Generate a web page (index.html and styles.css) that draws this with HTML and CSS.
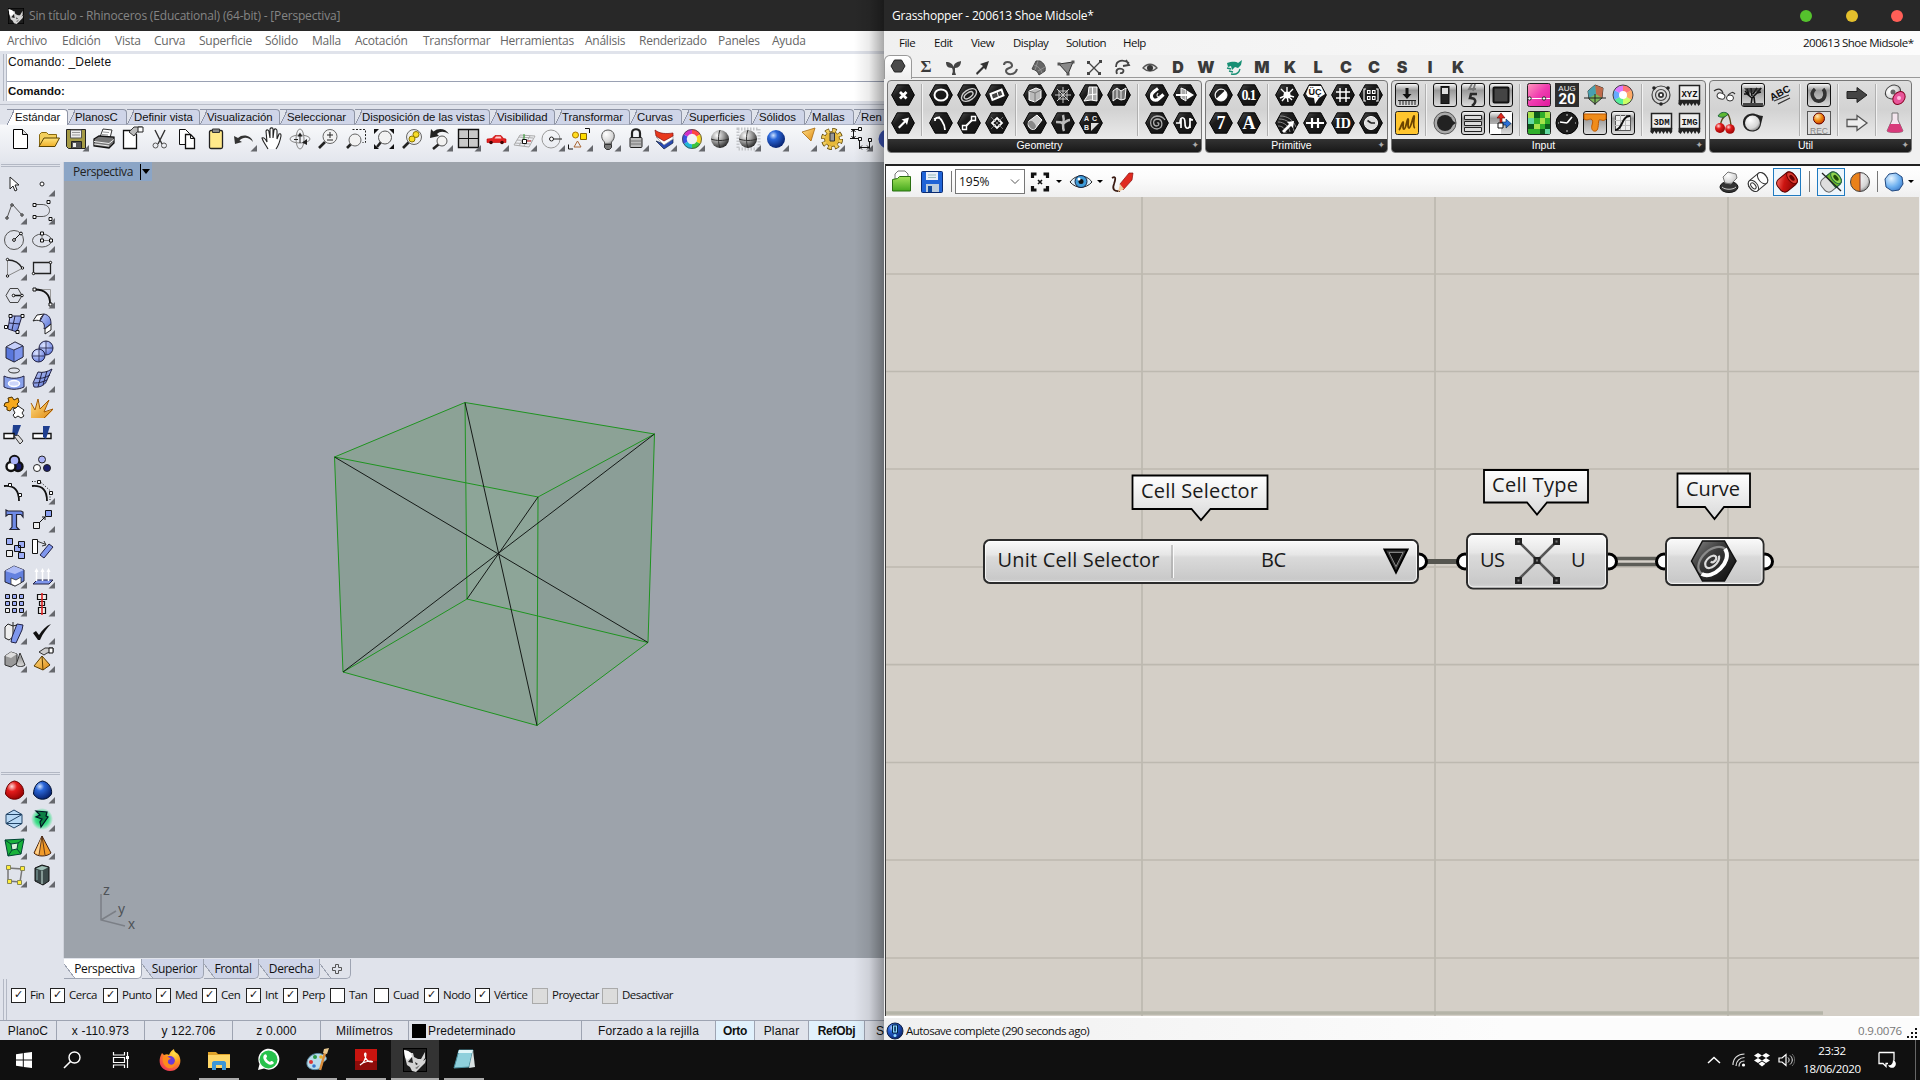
FILE: index.html
```html
<!DOCTYPE html>
<html lang="es">
<head>
<meta charset="utf-8">
<title>Rhinoceros / Grasshopper</title>
<link rel="stylesheet" href="styles.css">
</head>
<body>
<svg class="defs">
  <defs>
    <linearGradient id="gHex" x1="0" y1="0" x2="1" y2="1"><stop offset="0" stop-color="#555"/><stop offset=".35" stop-color="#1c1c1c"/><stop offset="1" stop-color="#111"/></linearGradient>
    <linearGradient id="gHexBig" x1="0" y1="0" x2="1" y2="1"><stop offset="0" stop-color="#8a8a8a"/><stop offset=".4" stop-color="#3a3a3a"/><stop offset="1" stop-color="#0c0c0c"/></linearGradient>
    <linearGradient id="gBtn" x1="0" y1="0" x2="0" y2="1"><stop offset="0" stop-color="#fff"/><stop offset=".3" stop-color="#999"/><stop offset="1" stop-color="#ddd"/></linearGradient>
    <linearGradient id="gNode" x1="0" y1="0" x2="0" y2="1"><stop offset="0" stop-color="#fbfbfb"/><stop offset=".34" stop-color="#e6e6e6"/><stop offset=".4" stop-color="#dadada"/><stop offset=".9" stop-color="#c9c9c9"/><stop offset="1" stop-color="#d6d6d6"/></linearGradient>
    <linearGradient id="gTip" x1="0" y1="0" x2="0" y2="1"><stop offset="0" stop-color="#fff"/><stop offset="1" stop-color="#d9d9d9"/></linearGradient>
    <linearGradient id="gBlue" x1="0" y1="0" x2="1" y2="1"><stop offset="0" stop-color="#c3cdf8"/><stop offset="1" stop-color="#5672d8"/></linearGradient>
    <linearGradient id="gOrange" x1="0" y1="0" x2="1" y2="1"><stop offset="0" stop-color="#ffe08a"/><stop offset="1" stop-color="#e08a10"/></linearGradient>
    <linearGradient id="gFold" x1="0" y1="0" x2="0" y2="1"><stop offset="0" stop-color="#ffe37a"/><stop offset="1" stop-color="#efb02a"/></linearGradient>
    <linearGradient id="gPink" x1="0" y1="0" x2="1" y2="1"><stop offset="0" stop-color="#f9b"/><stop offset=".5" stop-color="#f03cb0"/><stop offset="1" stop-color="#e0189c"/></linearGradient>
    <linearGradient id="gGrn" x1="0" y1="0" x2="0" y2="1"><stop offset="0" stop-color="#a6e35c"/><stop offset="1" stop-color="#45a81e"/></linearGradient>
    <linearGradient id="gRedCyl" x1="0" y1="0" x2="1" y2="1"><stop offset="0" stop-color="#ff7a70"/><stop offset=".4" stop-color="#cc1410"/><stop offset="1" stop-color="#7a0404"/></linearGradient>
    <radialGradient id="rGray" cx=".35" cy=".3" r=".75"><stop offset="0" stop-color="#fff"/><stop offset=".5" stop-color="#999"/><stop offset="1" stop-color="#222"/></radialGradient>
    <radialGradient id="rPale" cx=".35" cy=".3" r=".8"><stop offset="0" stop-color="#fff"/><stop offset=".7" stop-color="#d5d5d5"/><stop offset="1" stop-color="#777"/></radialGradient>
    <radialGradient id="rBlue" cx=".35" cy=".3" r=".8"><stop offset="0" stop-color="#cfe2ff"/><stop offset=".3" stop-color="#2a66d8"/><stop offset="1" stop-color="#02185f"/></radialGradient>
    <radialGradient id="rSky" cx=".35" cy=".3" r=".8"><stop offset="0" stop-color="#e6f4ff"/><stop offset=".6" stop-color="#6db0f0"/><stop offset="1" stop-color="#3a78c8"/></radialGradient>
    <radialGradient id="rRed" cx=".35" cy=".3" r=".8"><stop offset="0" stop-color="#ffd9d9"/><stop offset=".35" stop-color="#e31b1b"/><stop offset="1" stop-color="#8c0000"/></radialGradient>
    <radialGradient id="rLav" cx=".35" cy=".3" r=".8"><stop offset="0" stop-color="#dde4ff"/><stop offset="1" stop-color="#5a74dc"/></radialGradient>
    <radialGradient id="rOr" cx=".35" cy=".3" r=".8"><stop offset="0" stop-color="#ffe9b8"/><stop offset=".5" stop-color="#f08a10"/><stop offset="1" stop-color="#c03000"/></radialGradient>
    <radialGradient id="rFox" cx=".7" cy=".2" r=".9"><stop offset="0" stop-color="#ffe24a"/><stop offset=".45" stop-color="#ff9a1e"/><stop offset="1" stop-color="#f0305a"/></radialGradient>
    <radialGradient id="rGlow"><stop offset="0" stop-color="#0fae55"/><stop offset=".6" stop-color="#42e08c"/><stop offset="1" stop-color="#42e08c" stop-opacity="0"/></radialGradient>
    <path id="dd" d="M27 20v6.500h-6.500z" fill="#66686d"/>
    <path id="hex" d="M2.600 14L8.200 3.800h11.600L25.400 14l-5.600 10.200H8.200z" fill="url(#gHex)" stroke="#000"/>
    <rect id="btn" x="2.500" y="2.500" width="23" height="23" rx="2.500" fill="url(#gBtn)" stroke="#111"/>
    <path id="chip" d="M4.500 4.500h20v15h-20z" fill="#efefef" stroke="#222" stroke-width="1.500"/>
    <path id="chipleg" d="M3.800 19h21.400v4l-1.700 2-1.700-3-1.700 3-1.800-3-1.800 3-1.800-3-1.800 3-1.800-3-1.800 3-1.800-3-1.800 3-2.400-2z" fill="#222"/>
    <path id="lens" d="M5 23l6-6" stroke="#222" stroke-width="2.600" fill="none"/>
    <g id="rhino"><rect x=".5" y=".5" width="23" height="23" fill="#1c1c1c" stroke="#000"/><path d="M1 2l4 1 3 2 2 0 1 4 4 2 3 0 4-7 0 6-2 3 3-2-1 4-4 4-3 3-2 2-4-1-2-4-3-2-1-4-1-4z" fill="#d4d4d4"/><path d="M1 2l4 1 3 2 1 4-5 3-2-3z" fill="#fff"/><path d="M9 9l-4 5 5 1zM12 14l3 2-2 1z" fill="#222"/><path d="M12 20l5-3-3 4z" fill="#777"/></g>
    <path id="plus" d="M-1.500 -4.500h3v3h3v3h-3v3h-3v-3h-3v-3h3z" fill="none" stroke="#555"/>
  </defs>
</svg>

<div class="desktop">
<section class="rhino">
  <header class="title"><svg width="16" height="16" viewBox="0 0 24 24"><use href="#rhino"/></svg><span>Sin título - Rhinoceros (Educational) (64-bit) - [Perspectiva]</span></header>
  <nav class="rmenu"><span>Archivo</span><span>Edición</span><span>Vista</span><span>Curva</span><span>Superficie</span><span>Sólido</span><span>Malla</span><span>Acotación</span><span>Transformar</span><span>Herramientas</span><span>Análisis</span><span>Renderizado</span><span>Paneles</span><span>Ayuda</span></nav>
  <div class="command"><p>Comando: _Delete</p><p class="prompt">Comando:</p></div>
  <div class="toolarea">
    <div class="tabs"><span class="on">Estándar</span><span>PlanosC</span><span>Definir vista</span><span>Visualización</span><span>Seleccionar</span><span>Disposición de las vistas</span><span>Visibilidad</span><span>Transformar</span><span>Curvas</span><span>Superficies</span><span>Sólidos</span><span>Mallas</span><span>Ren</span></div>
    <div class="tools">
      <svg class="i"><path d="M7.500 4.500h9l5 5v14h-14z" fill="#fff" stroke="#000"/><path d="M16.500 4.500v5h5" fill="#ddd" stroke="#000"/></svg>
      <svg class="i"><path d="M5.500 20V9.500l2-2h5l2 2h8V14" fill="#f3cf5d" stroke="#8a6a10"/><path d="M5 21.500L10 13h15.500l-4.500 8.500z" fill="url(#gFold)" stroke="#5a4300"/></svg>
      <svg class="i"><path d="M4.500 4.500h19v19h-17l-2-2z" fill="#a59b45" stroke="#222"/><path d="M8.500 5h11v8h-11z" fill="#eee" stroke="#555"/><path d="M10 7.500h8M10 10h8" stroke="#999"/><path d="M9.500 16.500h10v7h-10z" fill="#555" stroke="#222"/><path d="M11 18h3v4h-3z" fill="#eee"/><use href="#dd"/></svg>
      <svg class="i"><path d="M10 12l3-8 9 1-2 8z" fill="#fff" stroke="#333"/><path d="M13 7l6 .5M12 9.500l6 .5" stroke="#999"/><path d="M4 14l5-3 15 1v6l-5 5-15-2z" fill="#777" stroke="#111" stroke-width="1.300"/><path d="M4 16.500l15 2 5-4M4 19l15 2" stroke="#eee" fill="none"/></svg>
      <svg class="i"><path d="M5.500 5.500h9l4 4v14h-13z" fill="#fff" stroke="#111" stroke-width="1.300"/><path d="M11 7l5-5h8v4l-5 1-3 4z" fill="#bbb" stroke="#333"/><path d="M20 2h5v5h-5z" fill="#fff" stroke="#222"/></svg>
      <svg class="i"><path d="M9 5l7 14M19 5l-7 14" stroke="#333" stroke-width="1.400"/><circle cx="9.500" cy="20.500" r="2.500" fill="none" stroke="#555"/><circle cx="18" cy="20.500" r="2.500" fill="none" stroke="#555"/></svg>
      <svg class="i"><path d="M5.500 4.500h6l4 4v11h-10z" fill="#fff" stroke="#111"/><path d="M11.500 9.500h5l4 4v10h-9z" fill="#fff" stroke="#111" stroke-width="1.300"/><path d="M16.500 9.500v4h4" fill="none" stroke="#111"/></svg>
      <svg class="i"><rect x="7.500" y="5.500" width="13" height="18" rx="1.500" fill="#ffe98a" stroke="#222" stroke-width="1.300"/><path d="M10.500 4h7v3.500h-7z" fill="#888" stroke="#333"/></svg>
      <svg class="i"><path d="M4 11l1 8 7-2-2.500-1.500c4-4 9-3.500 13.500 1.500-1-6-10-9-15-4z" fill="#333"/><use href="#dd"/></svg>
      <svg class="i"><path d="M10 24c-2-4-5-7-6-11 2-1 4 2 5 4L8 6c1-2 3-1 3 1l1 6V4c1-2 3-1 3 0v9l1-8c1-2 3-1 3 1v8l2-5c2-1 2 1 2 2-1 5-2 9-5 13" fill="#fff" stroke="#222" stroke-width="1.100"/></svg>
      <svg class="i"><ellipse cx="14" cy="14" rx="10" ry="4" fill="none" stroke="#888"/><ellipse cx="14" cy="14" rx="4" ry="10" fill="none" stroke="#888"/><path d="M14 9v9" stroke="#222" fill="none"/><path d="M11.500 11.500l2.500-4 2.500 4zM16 17.500l5-3.500v6zM8 14h4v1H8z" fill="#222"/></svg>
      <svg class="i"><use href="#lens"/><circle cx="16" cy="11.500" r="7" fill="#f2f2f2" stroke="#666"/><path d="M13 10h6M16 7v6M13 15h6" stroke="#222"/></svg>
      <svg class="i"><path d="M10.500 4.500h13v13h-3" fill="none" stroke="#222" stroke-dasharray="2 1.500"/><use href="#lens"/><circle cx="13" cy="15" r="6" fill="#f2f2f2" stroke="#666"/></svg>
      <svg class="i"><path d="M4 9V4h5zM24 9V4h-5zM4 19v5h5zM24 19v5h-5z" fill="#111"/><path d="M7 22l4-5" stroke="#222" stroke-width="2.500"/><circle cx="15" cy="12.500" r="6.500" fill="#f2f2f2" stroke="#555"/></svg>
      <svg class="i"><use href="#lens"/><circle cx="16" cy="12" r="7.500" fill="#eee" stroke="#666"/><circle cx="14" cy="14" r="3" fill="#f7dc28" stroke="#8a7400"/><circle cx="18" cy="9.500" r="3" fill="#f7dc28" stroke="#8a7400"/></svg>
      <svg class="i"><path d="M4 13l1-9 2.500 2.500C13 2 20 4 23 9c-5-3-9-3-12 0l2 2z" fill="#222"/><path d="M7 24l6-5" stroke="#222" stroke-width="2.500"/><circle cx="16" cy="16" r="5" fill="#f2f2f2" stroke="#555"/><use href="#dd"/></svg>
      <svg class="i"><path d="M4.500 4.500h20v18h-20z" fill="#c9c9c9" stroke="#111" stroke-width="1.400"/><path d="M14.500 4v18M4 13.500h20" stroke="#111"/><use href="#dd"/></svg>
      <svg class="i"><path d="M5 14l5-.5 3-3h6l2.500 3 2.500.5v3.500H5z" fill="#e22222" stroke="#b00" stroke-width=".6"/><path d="M14 11.500h4.500l1 2h-7z" fill="#ffd0d0"/><circle cx="9" cy="17.500" r="1.800" fill="#400"/><circle cx="20" cy="17.500" r="1.800" fill="#400"/><use href="#dd"/></svg>
      <svg class="i"><path d="M4 20l6-10 15 1-6 11zM7 15l15 1M9 21l6-11M14 21l6-10M5 18l15 1M9 12l14 1" fill="none" stroke="#aaa"/><path d="M14 16V9" stroke="#2a9a2a"/><path d="M14 16h7" stroke="#c22"/><path d="M12.500 14.500h4v4h-4z" fill="#fff" stroke="#111"/><use href="#dd"/></svg>
      <svg class="i"><circle cx="13" cy="14" r="9" fill="none" stroke="#999"/><path d="M14 14h10" stroke="#222"/><circle cx="13.500" cy="14" r="2" fill="#fff" stroke="#222"/><use href="#dd"/></svg>
      <svg class="i"><path d="M19 3.500h4.500V8M2.500 19.500V24H7" fill="none" stroke="#111"/><circle cx="9.500" cy="10" r="3" fill="#fd2" stroke="#a70"/><path d="M14.500 8.500h6v6h-6z" fill="#fd0" stroke="#860"/><path d="M11.500 16l3.500 6H8z" fill="none" stroke="#a63"/><use href="#dd"/></svg>
      <svg class="i"><path d="M10.500 17c-5-4.500-3-12 3.500-12s8.500 7.500 3.500 12v2h-7z" fill="url(#rPale)" stroke="#555"/><path d="M10.500 19.500h7v3l-2 2h-3l-2-2z" fill="#777" stroke="#333"/><use href="#dd"/></svg>
      <svg class="i"><path d="M10 13V8c0-5 8-5 8 0v5" fill="none" stroke="#222" stroke-width="2.200"/><rect x="8" y="12.500" width="12" height="10" rx="1" fill="#bbb" stroke="#222"/><path d="M9 16h10M9 19h10" stroke="#777"/><use href="#dd"/></svg>
      <svg class="i"><path d="M6 16l8 8 9-6v-4l-9 5z" fill="#2a4ab0" stroke="#124" stroke-width=".7"/><path d="M6 12l8 8 9-6v-4l-9 5z" fill="#fff" stroke="#999" stroke-width=".7"/><path d="M5 5c5 4 11 4 18 3v3l-9 5-8-5z" fill="#e8381c" stroke="#811" stroke-width=".7"/><use href="#dd"/></svg>
      <svg class="i"><g fill="none" stroke-width="4.500"><path d="M14 6.500a7.500 7.500 0 016.500 3.750" stroke="#f44"/><path d="M20.500 10.250a7.500 7.500 0 010 7.500" stroke="#f5d520"/><path d="M20.500 17.750A7.500 7.500 0 0114 21.500" stroke="#3bc43b"/><path d="M14 21.500a7.500 7.500 0 01-6.500-3.750" stroke="#20b8d8"/><path d="M7.500 17.750a7.500 7.500 0 010-7.500" stroke="#3a50e0"/><path d="M7.500 10.250A7.500 7.500 0 0114 6.500" stroke="#d030c8"/></g><circle cx="14" cy="14" r="9.500" fill="none" stroke="#444" stroke-width=".8"/><use href="#dd"/></svg>
      <svg class="i"><circle cx="14" cy="14" r="9" fill="url(#rGray)"/><path d="M5 14c5 2 13 2 18 0M14 5c-2 5-2 13 0 18" stroke="#333" fill="none"/></svg>
      <svg class="i"><path d="M4 4h21v20H4z" fill="none" stroke="#c4c6ca" stroke-width="3" stroke-dasharray="1.500 1.500"/><circle cx="14" cy="14" r="9" fill="url(#rGray)"/><path d="M5 14c5 2 13 2 18 0M14 5c-2 5-2 13 0 18" stroke="#333" fill="none"/><use href="#dd"/></svg>
      <svg class="i"><circle cx="14" cy="14" r="9" fill="url(#rBlue)"/><use href="#dd"/></svg>
      <svg class="i"><path d="M12 7l13-4-4 13z" fill="url(#gOrange)" stroke="#a76a10" stroke-width=".8"/><use href="#dd"/></svg>
      <svg class="i"><circle cx="14" cy="14" r="8.500" fill="none" stroke="#5c4300" stroke-width="5" stroke-dasharray="4 2.670"/><circle cx="14" cy="14" r="7.500" fill="#e7b93a" stroke="#6b4a00" stroke-width=".8"/><circle cx="14" cy="14" r="8.500" fill="none" stroke="#f0cc5c" stroke-width="3.500" stroke-dasharray="3 3.670" stroke-dashoffset="-.5"/><path d="M12 8h4.500v8H12z" fill="#999" stroke="#333"/><use href="#dd"/></svg>
      <svg class="i"><path d="M5 4.500h10M4 13.500h8M7.500 5v8M13.500 13v11M23.500 15v9M14 22.500h9M12.500 4.500h2" stroke="#111" fill="none"/><path d="M12.500 2.500h3v3h-3zM12.500 12.500h3v3h-3zM22.500 13.500h3v3h-3z" fill="#fff" stroke="#111"/><path d="M5.500 7l2-2.500 2 2.500M5.500 11l2 2.500 2-2.500M16 20.500l-2 2 2 2M21 20.500l2 2-2 2" stroke="#111" fill="none"/><use href="#dd"/></svg>
      <svg class="i"><circle cx="14" cy="14" r="9.500" fill="#3d55b8"/></svg>
    </div>
  </div>
  <div class="work">
    <aside class="side">
      <div class="palette">
      <svg class="i"><path d="M10 7v12l3-3 2 5 2-1-2-5h4z" fill="#fff" stroke="#222"/></svg>
      <svg class="i"><circle cx="14" cy="14" r="2" fill="#fff" stroke="#222"/><use href="#dd"/></svg>
      <svg class="i"><path d="M7 20l5-14 10 11" fill="none" stroke="#555"/><g fill="#fff" stroke="#111"><circle cx="7" cy="20" r="1.200"/><circle cx="12" cy="7" r="1.200"/><circle cx="22" cy="17" r="1.200"/></g><use href="#dd"/></svg>
      <svg class="i"><path d="M6 6.500h8c10 0 10 12 0 12H6" fill="none" stroke="#555"/><path d="M5 5.500h3v3H5zM5 17.500h3v3H5zM19 2.500h3v3h-3zM21 19.500h3v3h-3z" fill="#fff" stroke="#111"/><use href="#dd"/></svg>
      <svg class="i"><circle cx="14" cy="14" r="9.500" fill="none" stroke="#555"/><path d="M14 14l7-7" stroke="#111"/><circle cx="14" cy="14" r="1.400" fill="#fff" stroke="#111"/><circle cx="21" cy="7.500" r="1.400" fill="#fff" stroke="#111"/><use href="#dd"/></svg>
      <svg class="i"><ellipse cx="14" cy="14.500" rx="9.500" ry="6.500" fill="none" stroke="#555"/><path d="M14 14.500V8M14 14.500h9" stroke="#777"/><path d="M12.500 6h3v3h-3zM12.500 13h3v3h-3zM21.500 13h3v3h-3z" fill="#fff" stroke="#111"/><use href="#dd"/></svg>
      <svg class="i"><path d="M7.500 6v16" stroke="#888"/><path d="M7.500 22L23 14" stroke="#888"/><path d="M7.500 6c8 0 12 3 15 8.500" fill="none" stroke="#222" stroke-width="1.300"/><g fill="#fff" stroke="#111"><circle cx="7.500" cy="5.500" r="1.200"/><circle cx="7.500" cy="22" r="1.200"/><circle cx="22.500" cy="14" r="1.200"/></g><use href="#dd"/></svg>
      <svg class="i"><path d="M5.500 8.500h17v11h-17z" fill="none" stroke="#222" stroke-width="1.300"/><circle cx="5.500" cy="19.500" r="1.200" fill="#fff" stroke="#111"/><circle cx="22.500" cy="8.500" r="1.200" fill="#fff" stroke="#111"/><use href="#dd"/></svg>
      <svg class="i"><path d="M6 13.500l4-7h8l4 7-4 7h-8z" fill="none" stroke="#444"/><path d="M14 13.500h8" stroke="#111" stroke-width="1.500"/><circle cx="13.500" cy="13.500" r="1.300" fill="#fff" stroke="#111"/><circle cx="22" cy="13.500" r="1.300" fill="#fff" stroke="#111"/><use href="#dd"/></svg>
      <svg class="i"><path d="M7 7.500h15.500V22" fill="none" stroke="#999"/><path d="M7 7.500c10 0 15 5 15 14" fill="none" stroke="#111" stroke-width="1.800"/><path d="M5 6h3v3H5zM21 21h3v3h-3z" fill="#fff" stroke="#111"/><use href="#dd"/></svg>
      <svg class="i"><path d="M10 6h12l-5 16-9-3z" fill="url(#gBlue)" stroke="#224"/><path d="M9 13l11 1M15 6l-3 14" stroke="#224"/><path d="M9 4.500h3v3H9zM21 4.500h3v3h-3zM4.500 15.500h3v3h-3zM16 20.500h3v3h-3z" fill="#fff" stroke="#111"/><use href="#dd"/></svg>
      <svg class="i"><path d="M5 11l4-6 7-1c-2 2-4 4-4 7-2-1-4-1-7 0z" fill="#fff" stroke="#222"/><path d="M12 11l4-7c5 1 7 4 7 10l-7 5c1-4 0-7-4-8z" fill="url(#gBlue)" stroke="#224"/><path d="M23 14v6l-6 4v-5z" fill="#fff" stroke="#222"/><use href="#dd"/></svg>
      <svg class="i"><path d="M6 9l9-5 8 4v11l-9 5-8-4z" fill="#5a78dc" stroke="#223"/><path d="M6 9l9-5 8 4-9 4z" fill="#c6d0fa" stroke="#223" stroke-width=".7"/><path d="M14 12l9-4v11l-9 5z" fill="#7c94ec" stroke="#223" stroke-width=".7"/><use href="#dd"/></svg>
      <svg class="i"><circle cx="18" cy="10" r="7" fill="url(#rLav)" stroke="#224"/><circle cx="10.500" cy="17.500" r="6.500" fill="url(#rLav)" stroke="#224"/><path d="M11 10h14M18 3v14M4 18h13M11 11v13" stroke="#224" fill="none" stroke-width=".8"/><use href="#dd"/></svg>
      <svg class="i"><ellipse cx="14" cy="4.500" rx="5.500" ry="2.500" fill="none" stroke="#333"/><path d="M4 10c6 3 14 3 20 0v11c-6 3-14 3-20 0z" fill="#88a0ea" stroke="#224"/><ellipse cx="14" cy="17.500" rx="5.500" ry="3" fill="#cdd6fa" stroke="#fff" stroke-width="1.500"/><use href="#dd"/></svg>
      <svg class="i"><path d="M5 17l5-11c5 1 9 0 14-3l-5 11c-1 4-6 8-13 7z" fill="url(#gBlue)" stroke="#224"/><path d="M7 12c5 1 10 0 15-3M14 6l-4 15M19 5l-4 14M6 17c5 0 9-1 13-3" stroke="#224" fill="none"/><use href="#dd"/></svg>
      <svg class="i"><path d="M5 9l4-1-1-4 4-1 2 3 4-2 1 4-2 2 2 3-4 1-2-1-3 4-3-1v-3l-3-1z" fill="#f7a91c" stroke="#4a3000"/><path d="M13 15l3-1 2-2 3 2 3 2-2 3 2 3-3 2-3-2-3 2-2-3 2-2z" fill="#fff" stroke="#222"/></svg>
      <svg class="i"><path d="M3 24V10l4 6 3-10 2 9 9-9-5 12 9-2-8 8z" fill="url(#gOrange)"/><path d="M3 9l4 7 3-11 2 10 9-9-5 12 9-3-9 9" fill="none" stroke="#a55a00"/></svg>
      <svg class="i"><path d="M13 3h8l-5 13-4-1z" fill="#1f3f8f"/><path d="M4 11.500h10v5H4z" fill="#fff" stroke="#111" stroke-width="1.400"/><path d="M14 14l4-1 5 6-3 3z" fill="#ddd" stroke="#333"/></svg>
      <svg class="i"><path d="M5 11.500h18v5H5z" fill="#fff" stroke="#111" stroke-width="1.400"/><path d="M15 4h7l-4 13-3-2z" fill="#1f3f8f"/></svg>
      <svg class="i"><g stroke="#111" stroke-width="2.400"><circle cx="14.500" cy="10.500" r="4.500" fill="#aab2f7"/><circle cx="18" cy="16.500" r="4.500" fill="#1b1f70"/><circle cx="11" cy="16.500" r="4.500" fill="#fff"/></g><circle cx="14.500" cy="10.500" r="3.800" fill="#aab2f7"/><use href="#dd"/></svg>
      <svg class="i"><g stroke="#222"><circle cx="14" cy="9.500" r="3.500" fill="#aab2f7"/><circle cx="19" cy="18" r="3.500" fill="#1b1f70"/><circle cx="9" cy="18" r="3.500" fill="#fff"/></g></svg>
      <svg class="i"><path d="M4 8c11-1 15 5 15 15" fill="none" stroke="#111" stroke-width="1.800"/><path d="M8.500 5.500h3v3h-3zM18.500 15.500h3v3h-3z" fill="#fff" stroke="#111"/></svg>
      <svg class="i"><path d="M4 8c11-1 15 5 15 15" fill="none" stroke="#111" stroke-width="1.800"/><path d="M4 3.500h8l10 9v10" fill="none" stroke="#111" stroke-dasharray="1 1.500"/><path d="M9.500 2.500h3v3h-3zM21.500 13.500h3v3h-3z" fill="#fff" stroke="#111"/><use href="#dd"/></svg>
      <svg class="i"><path d="M6 4l2 1h13l2 1v5l-2-2.500h-4.500V21l2.500 2.500h-9l2-2.500V8.500H8L6 10z" fill="#6f8be6" stroke="#223" stroke-width="1.200"/></svg>
      <svg class="i"><path d="M5.500 16.500h6v6h-6z" fill="#eee" stroke="#111"/><path d="M17.500 4.500h6v6h-6z" fill="#8a9ff0" stroke="#111"/><path d="M11 17l6-6M14 11h3v3" stroke="#111" fill="none"/><use href="#dd"/></svg>
      <svg class="i"><g stroke="#111" fill="#9cacf5"><path d="M6.500 4.500h6v6h-6zM18.500 7.500h6v6h-6zM14.500 11.500h6v6h-6zM18.500 18.500h6v6h-6z"/><path d="M6.500 16.500h6v6h-6z" fill="#eee"/></g></svg>
      <svg class="i"><path d="M4.500 5.500h5v14h-5z" fill="#fff" stroke="#111"/><path d="M12 21l9-11 4 3-9 11z" fill="#7f97ee" stroke="#224"/><path d="M10 7.500l8 3M14 12l4-1-2-4" stroke="#333" fill="none"/></svg>
      <svg class="i"><path d="M5 9l9-5 10 4v11l-9 5-10-4z" fill="#6481df" stroke="#223"/><path d="M5 9l9-5 10 4-9 4z" fill="#aebcf6"/><path d="M11 16l5 2 5-3v6l-6 3-4-2z" fill="#fff" stroke="#222" stroke-width=".7"/><use href="#dd"/></svg>
      <svg class="i"><path d="M5 22l4-4h16l-4 4z" fill="#7f97ee" stroke="#224"/><path d="M8.500 19V8M14.500 19V8M20.500 19V8" stroke="#fff" stroke-width="1.500"/><path d="M6.500 10l2-4 2 4zM12.500 10l2-4 2 4zM18.500 10l2-4 2 4z" fill="#fff"/><use href="#dd"/></svg>
      <svg class="i"><g fill="#9cacf5" stroke="#111"><path d="M5.500 4.500h4v4h-4zM12.500 4.500h4v4h-4zM19.500 4.500h4v4h-4zM5.500 11.500h4v4h-4zM12.500 11.500h4v4h-4zM19.500 11.500h4v4h-4zM12.500 18.500h4v4h-4zM19.500 18.500h4v4h-4z"/><path d="M5.500 18.500h4v4h-4z" fill="#eee"/></g><use href="#dd"/></svg>
      <svg class="i"><g fill="#eee" stroke="#111" stroke-width="1.200"><path d="M9.500 4.500h9v5h-9zM11.500 11.500h5v4h-5zM10.500 17.500h7v6h-7z"/></g><path d="M14 3v22" stroke="#d22" stroke-width="1.600"/><use href="#dd"/></svg>
      <svg class="i"><path d="M5 9l3-3 5 2v11l-4 3-4-2z" fill="#eee" stroke="#222"/><path d="M12 19l5-13 6 1-1 5-6 13-5-1z" fill="#7f97ee" stroke="#224"/><path d="M13 4v4l4-1" stroke="#222" fill="none"/><use href="#dd"/></svg>
      <svg class="i"><path d="M5 15l3-2 3 4C14 12 18 8 23 6c-4 4-8 9-11 16h-2z" fill="#111"/><use href="#dd"/></svg>
      <svg class="i"><path d="M5 10l6-4 6 2v9l-6 4-6-2z" fill="#999" stroke="#333"/><path d="M5 10l6-4 6 2-6 4z" fill="#ddd"/><path d="M20 7l5 12c-2 2-7 2-9 0z" fill="url(#gBtn)" stroke="#333"/><use href="#dd"/></svg>
      <svg class="i"><path d="M6 20l8-10 8 9-7 5z" fill="url(#gOrange)" stroke="#5a3c00"/><path d="M14 10l1 14" stroke="#5a3c00"/><path d="M11 6l6-4h8v4l-6 1-3 2z" fill="#ccc" stroke="#333"/><path d="M21 2h4v5h-4z" fill="#fff" stroke="#111"/><use href="#dd"/></svg>
      </div>
      <div class="palette second">
      <svg class="i"><path d="M14.500 4c6 1 10 7 9 13-4 7-14 7-18 0 0-6 3-12 9-13z" fill="url(#rRed)" stroke="#600"/><use href="#dd"/></svg>
      <svg class="i"><path d="M14.500 4c6 1 10 7 9 13-4 7-14 7-18 0 0-6 3-12 9-13z" fill="url(#rBlue)" stroke="#013"/><use href="#dd"/></svg>
      <svg class="i"><path d="M14 5l8 4.500v9L14 23l-8-4.500v-9z" fill="#b9d9f5" stroke="#246"/><path d="M6 9.500h16M6 18.500h16M6 18.500L22 9.500" stroke="#246" fill="none"/><use href="#dd"/></svg>
      <svg class="i"><circle cx="14" cy="14" r="11" fill="url(#rGlow)"/><path d="M8 6l11 1-1 4 2 1-7 10-1-5 2-3-6-2 4-2z" fill="#0b8044" stroke="#012" stroke-width="1.200"/><use href="#dd"/></svg>
      <svg class="i"><path d="M5 7l19-1-3 15-13 2z" fill="#19b23b" stroke="#043"/><path d="M11 11l7-1-1 6-5 1z" fill="#d8eed8" stroke="#043"/><path d="M5 7l6 4M24 6l-6 4M21 21l-4-5M8 23l4-6" stroke="#043"/><use href="#dd"/></svg>
      <svg class="i"><path d="M14 3l9 17c-4 4-14 4-17 0z" fill="#f09a2a" stroke="#421"/><path d="M14 3L7 20l4 2z" fill="#ffd08a"/><path d="M14 3l-3 19M14 3l3 19" stroke="#421" stroke-width=".8"/><use href="#dd"/></svg>
      <svg class="i"><path d="M8 7l14 1-2 13-12-1z" fill="none" stroke="#777" stroke-width="1.500"/><g fill="#ffee3a" stroke="#885"><path d="M6.500 4.500h4v4h-4zM20.500 5.500h4v4h-4zM7.500 18.500h4v4h-4zM17.500 19.500h4v4h-4z"/></g><use href="#dd"/></svg>
      <svg class="i"><path d="M7 7l7-3 7 2v14l-6 4-8-4z" fill="#3d4b4b" stroke="#111"/><path d="M8 7.500l6-2.500 6 1.500-6 3z" fill="#9fc0b8"/><path d="M14 10v13" stroke="#cfe8e0"/><path d="M9 9v10" stroke="#8aa"/><use href="#dd"/></svg>
      </div>
    </aside>
    <main class="viewport">
      <svg class="scene" width="820" height="795" viewBox="64 162 820 795">
        <path d="M334.500 457L465 402.500 654.500 434 648 642.500 537 725.500 343 672z" fill="#8b9e97"/>
        <path d="M334.500 457L465 402.500 654.500 434 538 497zM343 672l124-73 181 43.500L537 725.500z" fill="#8ca296"/>
        <path d="M465 480l73 17 0 120-71-18z" fill="#8da598"/>
        <path d="M334.500 457L465 402.500 654.500 434 538 497zM343 672l124-73 181 43.500L537 725.500zM334.500 457L343 672M465 402.500l2 196.500M654.500 434L648 642.500M538 497l-1 228.500" fill="none" stroke="#1f9420" stroke-width="1"/>
        <path d="M334.500 457L648 642.500M465 402.500L537 725.500M654.500 434L343 672M538 497L467 599" fill="none" stroke="#151a17" stroke-width="1"/>
        <path d="M101 894v26l24 6M101 920l15-9" fill="none" stroke="#7b7f86" stroke-width="1.500"/>
        <g class="axis"><text x="103" y="895">z</text><text x="118" y="914">y</text><text x="128" y="929">x</text></g>
      </svg>
      <div class="vplabel"><span>Perspectiva</span><i></i></div>
    </main>
  </div>
  <div class="vptabs"><span class="on">Perspectiva</span><span>Superior</span><span>Frontal</span><span>Derecha</span><span class="add"><svg width="10" height="10" viewBox="-5 -5 10 10"><use href="#plus"/></svg></span></div>
  <div class="osnap">
    <label class="ck">Fin</label><label class="ck">Cerca</label><label class="ck">Punto</label><label class="ck">Med</label><label class="ck">Cen</label><label class="ck">Int</label><label class="ck">Perp</label><label>Tan</label><label>Cuad</label><label class="ck">Nodo</label><label class="ck">Vértice</label><label class="off">Proyectar</label><label class="off">Desactivar</label>
  </div>
  <footer class="rstatus"><span>PlanoC</span><span>x -110.973</span><span>y 122.706</span><span>z 0.000</span><span>Milímetros</span><span class="layer"><i></i>Predeterminado</span><span>Forzado a la rejilla</span><span class="act">Orto</span><span>Planar</span><span class="act">RefObj</span><span class="cut">S</span></footer>
</section>

<section class="gh">
  <header class="title"><span>Grasshopper - 200613 Shoe Midsole*</span><div class="dots"><i class="g"></i><i class="y"></i><i class="r"></i></div></header>
  <nav class="gmenu"><span>File</span><span>Edit</span><span>View</span><span>Display</span><span>Solution</span><span>Help</span><span class="doc">200613 Shoe Midsole*</span></nav>
  <div class="gtabs">
    <svg class="i first"><path d="M6 10l3.500-6h7L20 10l-3.500 6h-7z" fill="#4a4a4a" stroke="#222"/></svg>
    <b class="sigma">Σ</b>
    <svg class="i"><path d="M12 19c1-2 1-4 0-6-5 0-6-3-6-6 4 0 7 2 7.500 5C14 8 17 7 21 6c0 4-2 7-6 7v4l1 3h-4z" fill="#444"/></svg>
    <svg class="i"><path d="M8 18l7-7-3-2 9-3-3 9-2-2-7 7z" fill="#333"/></svg>
    <svg class="i"><path d="M8 10c0-4 7-4 8 0s-6 2-6 6 9 5 11-2" fill="none" stroke="#555" stroke-width="2"/></svg>
    <svg class="i"><path d="M8 14l4-8 4 0c4 2 6 6 5 10l-6 4c-1-3-3-5-7-6z" fill="#666" stroke="#444"/><path d="M10 10c4 1 7 4 8 8M14 6l-3 9M21 12l-7 4" stroke="#999" fill="none" stroke-width=".8"/></svg>
    <svg class="i"><path d="M7 9l14-2-5 12z" fill="#888" stroke="#333"/><path d="M5.500 7.500h3v3h-3zM19.500 5.500h3v3h-3zM14.500 17.500h3v3h-3z" fill="#555"/></svg>
    <svg class="i"><path d="M9 18l5-5 6-6M9 8l5 5 6 6" stroke="#444" stroke-width="1.300" fill="none"/><path d="M7 6h3v3H7zM7 17h3v3H7zM19 5h3v3h-3zM18 17h3v3h-3z" fill="#444"/></svg>
    <svg class="i"><path d="M9 19c-2-5 2-6 5-5s1 5-2 4M8 12c0-7 7-8 13-4M18 5l3 5-6 1" fill="none" stroke="#444" stroke-width="1.800"/></svg>
    <svg class="i"><path d="M7 13c4-5 10-5 14 0-4 4-10 4-14 0z" fill="#ddd" stroke="#555" stroke-width="1.300"/><circle cx="14" cy="13" r="3" fill="#333"/></svg>
    <b>D</b><b>W</b>
    <svg class="i"><path d="M7 8c4-1 8-2 11 0l4-3-1 5-3 3-3-1-3 3-1-4-3 1z" fill="#178f74"/><path d="M7 13l4 1M9 16l4 1M11 19c5 1 8-1 9-5" stroke="#178f74" fill="none" stroke-width="1.300"/></svg>
    <b>M</b><b>K</b><b>L</b><b>C</b><b>C</b><b>S</b><b>I</b><b>K</b>
  </div>
  <div class="ribbon">
    <div class="panel">
      <div class="groups">
        <div class="grp c1">
          <svg class="i"><use href="#hex"/><path d="M11 11l6.500 6.500M17.500 11L11 17.500" stroke="#fff" stroke-width="2.800"/></svg>
          <svg class="i"><use href="#hex"/><path d="M9 18l6-6-2.500-1.500 7.500-2-2 7.500-1.500-2.500-6 6z" fill="#fff"/></svg>
        </div>
        <div class="grp c3">
          <svg class="i"><use href="#hex"/><ellipse cx="14" cy="14" rx="6.500" ry="5.500" fill="none" stroke="#fff" stroke-width="2"/></svg>
          <svg class="i"><use href="#hex"/><g transform="rotate(-35 14 14)" fill="none" stroke="#ccc" stroke-width="1.400"><ellipse cx="14" cy="14" rx="8.500" ry="5"/><ellipse cx="13.500" cy="14" rx="5" ry="2.500"/></g></svg>
          <svg class="i"><use href="#hex"/><path d="M7.500 13l11-4.500 2 6-11 4.500z" fill="#444" stroke="#fff" stroke-width="2"/><path d="M14 11l1.500 5" stroke="#fff"/></svg>
          <svg class="i"><use href="#hex"/><path d="M8 12c0-5 5-4 7 0 2 3 3 6 3 9M7 10l6-2" fill="none" stroke="#fff" stroke-width="1.800"/></svg>
          <svg class="i"><use href="#hex"/><path d="M10 18l8-8" stroke="#fff" stroke-width="2"/><path d="M7.500 16.500h4v4h-4zM16.500 7.500h4v4h-4z" fill="#222" stroke="#fff" stroke-width="1.400"/></svg>
          <svg class="i"><use href="#hex"/><path d="M14 9l5 5-5 5-5-5z" fill="none" stroke="#fff" stroke-width="1.800"/><path d="M8 8l12 12M20 8L8 20" stroke="#888" stroke-width=".8"/></svg>
        </div>
        <div class="grp c4">
          <svg class="i"><use href="#hex"/><path d="M8 10l7-3 5 2v8l-6 4-6-2z" fill="#bbb" stroke="#fff"/><path d="M8 10l6 2 6-3M14 12v9" stroke="#777" fill="none"/></svg>
          <svg class="i"><use href="#hex"/><path d="M8 8l12 12M20 8L8 20M14 6v16M6 14h16M10 10h8v8h-8z" stroke="#ccc" fill="none"/></svg>
          <svg class="i"><use href="#hex"/><path d="M12 6h8v14l-6-1-7 1 4-6z" fill="#aaa" stroke="#fff"/><path d="M15.500 6v13M11 14l9-1" stroke="#fff"/></svg>
          <svg class="i"><use href="#hex"/><path d="M8 10l4-3 4 3 5-3-1 11-4 1-4-2-4 3z" fill="#777" stroke="#fff"/><path d="M12 7v10M16 10v9" stroke="#eee"/></svg>
          <svg class="i"><use href="#hex"/><path d="M8 12l8-6 5 5-7 9c-4 2-9-3-6-8z" fill="#ccc" stroke="#fff"/><ellipse cx="11" cy="16" rx="3" ry="4.500" fill="#888" transform="rotate(-40 11 16)"/></svg>
          <svg class="i"><use href="#hex"/><path d="M7 13c4 0 6 0 7 2 0 3 0 5 1 7M14 15c1-3 1-6 0-9M14 15c2-2 4-4 7-4" fill="none" stroke="#bbb" stroke-width="2.500"/></svg>
          <svg class="i"><use href="#hex"/><g class="mini"><text x="7" y="12">A</text><text x="15" y="12">C</text><text x="7" y="21">B</text></g><path d="M14 14h8l-4 4-4 4z" fill="#ddd"/></svg>
        </div>
        <div class="grp c2">
          <svg class="i"><use href="#hex"/><path d="M15 7.500l-4 3c-6 5 0 12 5 7l4.500-4" fill="none" stroke="#fff" stroke-width="3.200"/><path d="M15 12l-1 2c0 2 1 2 3 1" fill="none" stroke="#ccc" stroke-width="1.200"/></svg>
          <svg class="i"><use href="#hex"/><path d="M10 7l5 2v11l-5-3z" fill="#aaa" stroke="#fff"/><path d="M5 14h12" stroke="#fff" stroke-width="2"/><path d="M16 9.500l7 4.500-7 4.500z" fill="#fff"/></svg>
          <svg class="i"><use href="#hex"/><path d="M14 14c2-1 3 2 0 3-4 0-5-6 0-7 6 0 7 9 0 10-8 0-9-12 0-13 3 0 6 1 8 4" fill="none" stroke="#aaa" stroke-width="1.300"/></svg>
          <svg class="i"><use href="#hex"/><path d="M5 14h4c0-7 5-7 5 0s5 7 5 0-1-3 3-3M10 19V9M19 19V9" fill="none" stroke="#fff" stroke-width="1.700"/></svg>
        </div>
      </div>
      <div class="bar">Geometry<i>✦</i></div>
    </div>
    <div class="panel">
      <div class="groups">
        <div class="grp c2">
          <svg class="i"><use href="#hex"/><circle cx="14" cy="14" r="6" fill="#fff"/><path d="M9.500 17.500A6 6 0 0118 9.500z" fill="#222"/><circle cx="14" cy="14" r="6" fill="none" stroke="#fff"/></svg>
          <svg class="i"><use href="#hex"/><text class="glyph w" x="14" y="19" textLength="15">0.1</text></svg>
          <svg class="i"><use href="#hex"/><text class="glyph big" x="14" y="20">7</text></svg>
          <svg class="i"><use href="#hex"/><text class="glyph big" x="14" y="20">A</text></svg>
        </div>
        <div class="grp c4">
          <svg class="i"><use href="#hex"/><path d="M14 14L8 8M14 14l6-6M14 14l7 2M14 14l-7 3M14 14l1 7M14 14V6M14 14l5 5M14 14l-5 6" stroke="#fff" stroke-width="1.400"/><circle cx="14" cy="14" r="3.500" fill="#fff"/></svg>
          <svg class="i"><use href="#hex"/><path d="M5 13l3-8h12l4 8-6 4-4 6-1-6-6-1z" fill="#fff"/><text class="uc" x="14" y="13.500">ÜÇ</text></svg>
          <svg class="i"><use href="#hex"/><path d="M11 7v14M17 7v14M7 11h14M7 17h14" stroke="#fff" stroke-width="1.500"/></svg>
          <svg class="i"><use href="#hex"/><path d="M9 8H7v12h2M19 8h2v12h-2M10.500 9.500h2.500v3h-2.500zM15.500 9.500H18v3h-2.500zM10.500 15.500h2.500v3h-2.500zM15.500 15.500H18v3h-2.500z" stroke="#fff" fill="none" stroke-width="1.100"/></svg>
          <svg class="i"><use href="#hex"/><path d="M6 10c8 0 14 5 15 12M5 13c6 0 11 4 12 10M7 7c8 0 13 4 16 11M5 17c4 0 7 2 8 7" stroke="#888" fill="none"/><path d="M9 22l7-7-2-2 7-1-1 7-2-2-7 7z" fill="#fff"/></svg>
          <svg class="i"><use href="#hex"/><path d="M5 14h18M11 9v10M17 9v10" stroke="#fff" stroke-width="2.200"/></svg>
          <svg class="i"><use href="#hex"/><text class="glyph" x="14" y="19">ID</text></svg>
          <svg class="i"><use href="#hex"/><circle cx="14" cy="14" r="6.500" fill="#ddd" stroke="#fff"/><path d="M14 14l-3.500-2.500M14 14h4" stroke="#222" stroke-width="1.600"/></svg>
        </div>
      </div>
      <div class="bar">Primitive<i>✦</i></div>
    </div>
    <div class="panel">
      <div class="groups">
        <div class="grp c1">
          <svg class="i"><use href="#btn"/><path d="M12.500 7h3v6h3L14 18l-4.500-5h3z" fill="#111"/><path d="M5 19.500h18M7 20v4M10 20v4M13 20v4M16 20v4M19 20v4M22 20v4" stroke="#222"/></svg>
          <svg class="i"><rect x="2.500" y="2.500" width="23" height="23" rx="2" fill="#ffc52e" stroke="#222"/><path d="M6 21c2-2 3-8 4-8s-1 7 1 7 3-10 4-10-1 9 1 9 4-12 5-12-2 11 1 12" fill="none" stroke="#6b4300" stroke-width="1.800"/></svg>
        </div>
        <div class="grp c3">
          <svg class="i"><use href="#btn"/><rect x="10" y="5.500" width="8" height="17" fill="#222" stroke="#111"/><path d="M11 7h6v6h-6z" fill="#ddd"/></svg>
          <svg class="i"><use href="#btn"/><path d="M13 3l-3 5h7M16 3l-2 7" fill="none" stroke="#777" stroke-width="1.800"/><path d="M18 13h-6l-1 4c6 0 7 4 2 8" fill="none" stroke="#2a2a2a" stroke-width="2.600"/></svg>
          <svg class="i"><use href="#btn"/><rect x="6.500" y="6.500" width="15" height="15" rx="1" fill="#444" stroke="#111" stroke-width="2"/></svg>
          <svg class="i"><circle cx="14" cy="14" r="11" fill="#aaa" stroke="#555"/><circle cx="14" cy="14" r="8" fill="#222"/><path d="M19 10l6 4-6 4z" fill="#222"/></svg>
          <svg class="i"><use href="#btn"/><path d="M5.500 6.500h17v4h-17zM5.500 12.500h17v4h-17zM5.500 18.500h17v4h-17z" fill="#ddd" stroke="#222"/></svg>
          <svg class="i"><use href="#btn"/><path d="M3 15h11v10H3zM15 3h10v11H15z" fill="#fff"/><path d="M13 14V9h-3l4-5 4 5h-3v5" fill="#e02b20" stroke="#600" stroke-width=".6"/><path d="M15 13h4v-3l5 4.500-5 4.500v-3h-4z" fill="#2a6fd8" stroke="#024" stroke-width=".6"/><path d="M11 14h5v5h-5z" fill="#fff" stroke="#111"/></svg>
        </div>
        <div class="grp c4">
          <svg class="i"><rect x="2.500" y="2.500" width="23" height="23" rx="2" fill="url(#gPink)" stroke="#222"/><path d="M3 17.500h22" stroke="#fff"/><circle cx="4.500" cy="17.500" r="1.700" fill="#fff" stroke="#222"/><circle cx="19" cy="17.500" r="1.700" fill="#fff" stroke="#222"/></svg>
          <svg class="i"><path d="M2 2h24v24H2z" fill="#2d2d2d"/><text class="aug" x="14" y="9.500">AUG</text><text class="day" x="14" y="23">20</text></svg>
          <svg class="i"><path d="M7 10l7-6 8 3-1 10-7 6-6-5z" fill="#7cb85a" stroke="#333"/><path d="M14 4l8 3-1 10-6-4z" fill="#c06a4a"/><path d="M7 10l7-6 1 9-7 4z" fill="#48a0b0"/><path d="M3 17h22M14 24V13" stroke="#222"/></svg>
          <svg class="i"><g fill="none" stroke-width="8"><path d="M14 8a6 6 0 015.200 3" stroke="#f77"/><path d="M19.200 11a6 6 0 010 6" stroke="#fa6"/><path d="M19.200 17A6 6 0 0114 20" stroke="#cf6"/><path d="M14 20a6 6 0 01-5.200-3" stroke="#5e9"/><path d="M8.800 17a6 6 0 010-6" stroke="#6af"/><path d="M8.800 11A6 6 0 0114 8" stroke="#d7f"/></g><circle cx="14" cy="14" r="4" fill="#fff"/><circle cx="14" cy="14" r="10" fill="none" stroke="#444"/></svg>
          <svg class="i"><rect x="2.500" y="2.500" width="23" height="23" rx="2" fill="#2fae2a" stroke="#222"/><path d="M3 3h6v6H3zM15 9h5v6h-5zM9 15h6v5H9zM20 3h5v6h-5z" fill="#a5e24a"/><path d="M9 3h6v6H9zM3 15h6v5H3zM20 15h5v5h-5zM15 20h5v5h-5z" fill="#0b5a1a"/><path d="M20 20h5v5h-5zM3 9h6v6H3z" fill="#62d8a0"/></svg>
          <svg class="i"><circle cx="14" cy="14" r="11" fill="#1c1c1c" stroke="#000"/><path d="M14 14l5-6M14 14l-7-1" stroke="#fff" stroke-width="1.700"/><path d="M14 5v2M14 21v2M5 14h1M22 14h1" stroke="#ccc"/></svg>
          <svg class="i"><use href="#btn"/><path d="M3 5h22v5c-3 3-5 0-7 1-1 1 0 10-3 11-4 1-5-3-4-6 1-3 1-5-1-6-2 0-4 2-7 0z" fill="#f08c1a" stroke="#c05a00"/></svg>
          <svg class="i"><use href="#btn"/><path d="M6.500 6.500h15v15h-15z" fill="#eee" stroke="#555"/><path d="M11.500 6v15M16.500 6v15M6 11.500h15M6 16.500h15" stroke="#bbb"/><path d="M6 21c8 0 6-14 15-14" fill="none" stroke="#111" stroke-width="2"/></svg>
        </div>
        <div class="grp c2">
          <svg class="i"><g fill="none" stroke="#444" stroke-width="1.200"><circle cx="14" cy="14" r="9"/><circle cx="14" cy="14" r="5.500"/></g><circle cx="14" cy="14" r="3" fill="#333"/><circle cx="14" cy="14" r="1.200" fill="#fff"/><g fill="#222"><circle cx="7" cy="7" r="1.800"/><circle cx="21" cy="7" r="1.800"/><circle cx="14" cy="23" r="1.800"/></g></svg>
          <svg class="i"><use href="#chip"/><use href="#chipleg"/><text class="chipt" x="14.500" y="15.500">XYZ</text></svg>
          <svg class="i"><use href="#chip"/><use href="#chipleg"/><text class="chipt" x="14.500" y="15.500">3DM</text></svg>
          <svg class="i"><use href="#chip"/><use href="#chipleg"/><text class="chipt" x="14.500" y="15.500">IMG</text></svg>
        </div>
      </div>
      <div class="bar">Input<i>✦</i></div>
    </div>
    <div class="panel">
      <div class="groups">
        <div class="grp c3">
          <svg class="i"><path d="M3 10c5-4 8-1 9 2M24 13c-3-3-4-1-7 1" fill="none" stroke="#333" stroke-width="1.200"/><ellipse cx="10" cy="15" rx="4" ry="3" fill="#fff" stroke="#333" transform="rotate(20 10 15)"/><ellipse cx="19" cy="17" rx="3.500" ry="3" fill="#fff" stroke="#333"/></svg>
          <svg class="i"><use href="#btn"/><path d="M12 24l1-7-5-4-3 0M13 17l5-5 4-1M13 15l-1-8M16 24l-1-8M14 13l4-6M10 14L8 8M18 12l4-5M6 10l3 3" stroke="#111" stroke-width="1.600" fill="none"/><path d="M5 7h18l-3 5-4-2-4 2-4-1z" fill="#222" opacity=".7"/><path d="M4 22h20v3H4z" fill="#444"/></svg>
          <svg class="i"><text class="abc" x="14" y="15" transform="rotate(-28 14 14)">ABC</text><path d="M7 20l15-6M11 23l12-6" stroke="#333" stroke-width="1.300"/></svg>
          <svg class="i"><path d="M9 18c1-6 2-10 8-13M20 19c0-6-1-10-3-14" fill="none" stroke="#574a1c" stroke-width="1.400"/><path d="M7 7c3-5 8-4 10-2-3 4-7 4-10 2z" fill="#5db832" stroke="#264"/><circle cx="9" cy="19" r="5" fill="url(#rRed)"/><circle cx="19" cy="20" r="4.800" fill="url(#rRed)"/></svg>
          <svg class="i"><path d="M13 4.500c4 0 6 2 11 2.500l-2 8c-1 9-13 10-17 3-3-7 1-13 8-13.500z" fill="#222"/><circle cx="13.500" cy="14" r="7.500" fill="url(#rPale)"/></svg>
        </div>
        <div class="grp c1">
          <svg class="i"><use href="#btn"/><path d="M10 8c-6 5-1 13 5 12 6-2 6-9 3-12" fill="none" stroke="#333" stroke-width="3.500"/></svg>
          <svg class="i"><rect x="2.500" y="2.500" width="23" height="23" fill="#ddd" stroke="#555"/><circle cx="14" cy="9.500" r="5.500" fill="url(#rOr)" stroke="#600"/><text class="rec" x="14" y="24.500">REC</text></svg>
        </div>
        <div class="grp c1">
          <svg class="i"><path d="M4 10.500h10v-4l10 7.500-10 7.500v-4H4z" fill="#444" stroke="#222"/></svg>
          <svg class="i"><path d="M4 10.500h10v-4l10 7.500-10 7.500v-4H4z" fill="#eee" stroke="#555" stroke-width="1.300"/></svg>
        </div>
        <div class="grp c1">
          <svg class="i"><ellipse cx="12" cy="11" rx="8" ry="6.500" fill="url(#rPale)" stroke="#444" transform="rotate(-30 12 11)"/><ellipse cx="18" cy="17" rx="7" ry="5.500" fill="#e8559a" stroke="#802" transform="rotate(-50 18 17)"/><circle cx="12" cy="11" r="2.500" fill="#666"/><circle cx="18" cy="17" r="2" fill="#fbd"/></svg>
          <svg class="i"><path d="M11 4h6v7l5 11c0 2-16 2-16 0l5-11z" fill="#f4e6ee" stroke="#777"/><path d="M9 15h10l3 7c-2 2-14 2-16 0z" fill="#d83a7a"/></svg>
        </div>
      </div>
      <div class="bar">Util<i>✦</i></div>
    </div>
  </div>
  <div class="ctools">
    <svg class="i"><path d="M7 12V6l3-3h7l3 3v6z" fill="#fff" stroke="#777"/><path d="M4.500 11.500l5-1 2-2h11v14.500h-18z" fill="url(#gGrn)" stroke="#2b6f12"/></svg>
    <svg class="i"><rect x="3.500" y="3.500" width="21" height="21" rx="1" fill="#1f63d6" stroke="#0a2a70"/><path d="M8 4h12v8H8z" fill="#e8eef8"/><path d="M10 7h8M10 9.500h8" stroke="#9bb"/><path d="M8 16h13v8H8z" fill="#bcd"/><path d="M10 18h4v6h-4z" fill="#124a9c"/></svg>
    <u></u>
    <div class="combo"><span>195%</span><svg width="10" height="6"><path d="M1 .5l4 4 4-4" fill="none" stroke="#555"/></svg></div>
    <svg class="i"><path d="M6.500 10.500V6.500h4M17.500 6.500h4v4M21.500 18.500v4h-4M10.500 22.500h-4v-4" transform="translate(0 -.5)" fill="none" stroke="#111" stroke-width="3.200"/><path d="M12 12l4 4M16 12l-4 4" stroke="#111" stroke-width="1.600"/></svg>
    <em></em>
    <svg class="i"><path d="M3 14c6-8 16-8 22 0-6 7-16 7-22 0z" fill="#dff0fb" stroke="#222"/><circle cx="14" cy="13.500" r="6" fill="#3d9bd8" stroke="#124"/><circle cx="14" cy="13.500" r="2.500" fill="#111"/><circle cx="12" cy="11" r="1.500" fill="#fff"/></svg>
    <em></em>
    <svg class="i"><path d="M4 10c5-3 3 3 2 6-2 5 0 8 6 7" fill="none" stroke="#3a1a12" stroke-width="1.800"/><path d="M12 16L21 5l4 0-1 7-9 10z" fill="#e02a20" stroke="#811" stroke-width=".7"/><path d="M12 16l4 5-6 3z" fill="#f1c79a"/></svg>
    <div class="right">
      <svg class="i"><ellipse cx="14" cy="19" rx="9" ry="5.500" fill="#333" stroke="#111"/><path d="M8 9l5-5 8 2 1 4-6 6-6-1z" fill="url(#rPale)" stroke="#777"/><path d="M7 19c3 3 11 3 14 0" stroke="#ccc" fill="none"/></svg>
      <svg class="i"><g transform="rotate(-40 14 14)" fill="#fff" stroke="#333"><rect x="4" y="7.500" width="20" height="13" rx="5"/><ellipse cx="8" cy="14" rx="4" ry="6.500"/><ellipse cx="8" cy="14" rx="2" ry="3.500"/><ellipse cx="20" cy="14" rx="4" ry="6.500"/></g></svg>
      <svg class="i sel"><g transform="rotate(-40 14 14)"><rect x="4" y="6.500" width="20" height="15" rx="5" fill="url(#gRedCyl)" stroke="#500"/><ellipse cx="20.500" cy="14" rx="3.800" ry="7" fill="#d8382e" stroke="#600"/><ellipse cx="20.500" cy="14" rx="1.800" ry="3.500" fill="#600"/></g></svg>
      <u></u>
      <svg class="i sel"><g transform="rotate(-40 14 14)"><rect x="4" y="6.500" width="20" height="15" rx="5" fill="#dedede" stroke="#666"/><path d="M14 6.500h6q4 1 4 7.500t-4 7.500h-6z" fill="#6cb82a" stroke="#264"/><ellipse cx="20.500" cy="14" rx="3.800" ry="7" fill="#8fd24e" stroke="#264"/><ellipse cx="20.500" cy="14" rx="1.800" ry="3.500" fill="#1f4a08"/></g><path d="M5 5l19 18" stroke="#222" stroke-width="1.300"/></svg>
      <svg class="i"><circle cx="14" cy="14" r="9.500" fill="url(#rPale)"/><path d="M14 4.500a9.500 9.500 0 000 19z" fill="#e9811a"/><circle cx="14" cy="14" r="9.500" fill="none" stroke="#444"/><path d="M14 4.500v19" stroke="#733"/></svg>
      <u></u>
      <svg class="i"><path d="M5 11l4-5 7-1 6 4 1 7-4 6-7 1-6-4z" fill="url(#rSky)" stroke="#234a80"/></svg>
      <em></em>
    </div>
  </div>
  <svg class="canvas" width="1034" height="819" viewBox="885 197 1034 819">
    <path d="M885 197h1034v819H885z" fill="#d4cfc7"/>
    <path d="M1142 197v819M1435 197v819M1728 197v819M885 274h1034M885 371.500h1034M885 469h1034M885 567h1034M885 664.700h1034M885 762.500h1034M885 860h1034M885 958h1034" stroke="#bdb9b0" stroke-width="1.700" fill="none"/>
    <path d="M886 1013h937" stroke="#b5b4a8" stroke-width="3.500"/>
    <path d="M885.500 197v819" stroke="#3a3a3a"/>
    <path d="M1427 561.500h35" stroke="#55554f" stroke-width="5"/>
    <path d="M1614 558.500h45M1614 564.500h45" stroke="#5d5d57" stroke-width="3.600"/>
    <g fill="#fff" stroke="#000" stroke-width="3"><circle cx="1419" cy="561.500" r="7.500"/><circle cx="1465" cy="561.500" r="7.500"/><circle cx="1609" cy="561.500" r="7.500"/><circle cx="1664" cy="561.500" r="7.500"/><circle cx="1765" cy="561.500" r="7.500"/></g>
    <g fill="url(#gNode)" stroke="#2b2b2b" stroke-width="2"><rect x="984" y="540" width="434" height="43" rx="6"/><rect x="1467" y="534" width="140" height="54.500" rx="6"/><rect x="1666" y="538" width="97.500" height="47" rx="6"/></g>
    <g fill="none" stroke="#fff" stroke-opacity=".75"><rect x="985.500" y="541.500" width="431" height="40" rx="5"/><rect x="1468.500" y="535.500" width="137" height="51.500" rx="5"/><rect x="1667.500" y="539.500" width="94.500" height="44" rx="5"/></g>
    <path d="M1172 545v33" stroke="#999"/><path d="M1173.500 545v33" stroke="#fafafa"/>
    <path d="M1384.500 549.500h23L1396 572.500z" fill="#3a3a3a" stroke="#000" stroke-width="2"/><path d="M1389 552.500h14l-7 14z" fill="#111" stroke="#999" stroke-width=".8"/>
    <g fill="url(#gTip)" stroke="#000" stroke-width="1.800"><path d="M1132.500 475.500h135v33.500h-57l-9.500 11-9.500-11h-59z"/><path d="M1484 470h104v32.500h-41l-10 12-10-12h-43z"/><path d="M1677.500 473.500h72.500v33.500h-26l-9.500 12-9.500-12h-27.500z"/></g>
    <g class="lbl">
      <text x="1141" y="498" textLength="117">Cell Selector</text>
      <text x="1492" y="492" textLength="86">Cell Type</text>
      <text x="1686" y="496" textLength="54">Curve</text>
      <text x="997.500" y="567" textLength="162">Unit Cell Selector</text>
      <text x="1261" y="567" textLength="25">BC</text>
      <text x="1480" y="567" textLength="25">US</text>
      <text x="1571" y="567" textLength="14">U</text>
    </g>
    <path d="M1518 541l39 39M1557 541l-39 39" stroke="#555" stroke-width="2.600"/>
    <path d="M1515 538h7v7h-7zM1553 538h7v7h-7zM1515 577h7v7h-7zM1553 577h7v7h-7zM1533.500 557h7v7h-7z" fill="#222"/>
    <path d="M1517.500 540.500h2v2h-2zM1555.500 540.500h2v2h-2zM1517.500 579.500h2v2h-2zM1555.500 579.500h2v2h-2zM1536 559.500h2v2h-2z" fill="#777"/>
    <path d="M1691.500 561l11-20h22l11.500 20-11.500 20h-22z" fill="url(#gHexBig)" stroke="#111" stroke-width="1.500"/>
    <g transform="rotate(-42 1713 561)" fill="none"><ellipse cx="1713" cy="561" rx="17" ry="11" stroke="#8a8a8a" stroke-width="2.200"/><path d="M1696 563c3 12 32 12 34-3" stroke="#fff" stroke-width="4"/><path d="M1721 561c-3 6-18 6-17-1 2-6 15-5 14 0-1 3-7 3-7 0" stroke="#ddd" stroke-width="2.200"/></g>
  </svg>
  <footer class="gstatus"><svg width="18" height="18"><circle cx="9" cy="9" r="8" fill="url(#rBlue)" stroke="#124"/><path d="M6.500 3h5v8h-5z" fill="#8fd8ff" stroke="#024"/><path d="M8.300 4.500h1.500v5H8.300z" fill="#024"/><circle cx="9" cy="13.500" r="1.500" fill="#8fd8ff"/></svg><span>Autosave complete (290 seconds ago)</span><span class="ver">0.9.0076</span><svg class="gripper" width="11" height="11"><path d="M8 0h2v2H8zM8 4h2v2H8zM4 4h2v2H4zM8 8h2v2H8zM4 8h2v2H4zM0 8h2v2H0z" fill="#111"/></svg></footer>
</section>
</div>

<footer class="taskbar">
  <span class="t"><svg width="24" height="24"><path d="M4 6.200l6.800-1v6.300H4zM11.800 5.100L20 4v7.500h-8.200zM4 12.500h6.800v6.300L4 17.800zM11.800 12.500H20V20l-8.200-1.100z" fill="#fff"/></svg></span>
  <span class="t"><svg width="24" height="24"><circle cx="14.500" cy="9.500" r="5.500" fill="none" stroke="#fff" stroke-width="1.400"/><path d="M10.500 13.500L4 20" stroke="#fff" stroke-width="1.600"/></svg></span>
  <span class="t"><svg width="24" height="24"><path d="M4.500 4v3h11V4M4.500 20v-3h11v3M4.500 9.500h11v5h-11zM18.500 4v16" fill="none" stroke="#fff" stroke-width="1.200"/><path d="M17 8h3v3h-3z" fill="#fff"/></svg></span>
  <span class="t"><svg width="24" height="24"><path d="M4 5l2 2c2-1 4-1 5 0 1-3 3-5 5-6 0 3 3 4 4 5 5 6 2 17-8 17C2 23-1 13 4 5z" fill="url(#rFox)"/><circle cx="12" cy="13" r="5" fill="#6a3ad8"/><path d="M5 9c3-2 6 0 8 2-3 0-4 3-2 5 4 2 6-1 6-4 2 6-3 9-7 8-4-2-6-6-5-11z" fill="#ff8a1c"/></svg></span>
  <span class="t run"><svg width="24" height="24"><path d="M1 4h8l2 2h12v5H1z" fill="#e0a32a"/><path d="M1 7h22v13H1z" fill="#ffd768"/><path d="M5 22v-7c0-1 1-2 2-2h10c1 0 2 1 2 2v7h-4v-5H9v5z" fill="#3d97d6"/></svg></span>
  <span class="t"><svg width="24" height="24"><path d="M2 22l1.500-6A10.500 10.500 0 118 20.500z" fill="#fff"/><circle cx="12.500" cy="11.500" r="9" fill="#27c24c"/><path d="M8 7c2-2 3 0 3 2l-1 1c1 2 2 3 4 4l1-1c2 0 4 2 2 3-5 3-12-5-9-9z" fill="#fff"/></svg></span>
  <span class="t run"><svg width="24" height="24"><path d="M2 14C3 7 12 3 19 7c5 4 1 6-1 7s0 5-4 7C7 23 1 20 2 14z" fill="#b9dcec" stroke="#5b8ba5"/><circle cx="6" cy="14" r="2" fill="#d33"/><circle cx="10" cy="9" r="2" fill="#2a9a4a"/><circle cx="16" cy="9" r="1.800" fill="#e8b020"/><circle cx="9" cy="18" r="1.800" fill="#37c"/><path d="M15 22l5-17" stroke="#d98b3a" stroke-width="2.500"/><path d="M18 5l1-4 5-1-2 6z" fill="#e9c98f"/></svg></span>
  <span class="t run"><svg width="24" height="24"><rect x="1" y="1" width="22" height="21" fill="#c8140f"/><path d="M1 13h22v9H1z" fill="#8e0c0a"/><path d="M6 17c3-1 6-6 6-11-1-2-2 0-1 2 1 4 4 6 7 6 2-1-3-1-5-.5-3 .5-5 1.500-7 3.500z" fill="none" stroke="#fff" stroke-width="1.200"/></svg></span>
  <span class="t run active"><svg width="24" height="24"><use href="#rhino"/></svg></span>
  <span class="t run"><svg width="24" height="24"><path d="M7 2h14l-4 17-15 1z" fill="#8fd0dc" stroke="#4a8d9c"/><path d="M7 2h14l-1 3H6z" fill="#dff5f8"/><path d="M21 2l2 17-6 1z" fill="#d9e2e2"/></svg></span>
  <div class="tray">
    <svg width="14" height="8"><path d="M1 7l6-5.500L13 7" fill="none" stroke="#fff" stroke-width="1.500"/></svg>
    <svg width="14" height="14"><path d="M1 12C1 5 6 1 12.500 1M4 13c0-5 4-8.500 8.500-8.500M7 13.500C7 10 9 8 12.500 8" fill="none" stroke="#ddd" stroke-width="1.200"/><circle cx="11.500" cy="12" r="1.600" fill="#fff"/></svg>
    <svg width="16" height="14"><path d="M4 0l4 2.500L4 5 0 2.500zM12 0l4 2.500L12 5 8 2.500zM4 5l4 2.500L4 10 0 7.500zM12 5l4 2.500L12 10 8 7.500zM8 8.500l3.500 2.300L8 13.500l-3.500-2.700z" fill="#fff"/></svg>
    <svg width="17" height="14"><path d="M1 5h3l4-3.500v11L4 9H1z" fill="none" stroke="#fff" stroke-width="1.200"/><path d="M10 4.500c1.500 1.500 1.500 3.500 0 5M12 2.500c3 2.500 3 6.500 0 9" fill="none" stroke="#eee"/><path d="M14 1c3.500 3 3.500 9 0 12" fill="none" stroke="#666"/></svg>
    <div class="clock"><span>23:32</span><span>18/06/2020</span></div>
    <svg class="note" width="18" height="18"><path d="M1 1.500h15v8M1 1.500v11h4l3 3v-3h2" fill="none" stroke="#fff" stroke-width="1.300"/><path d="M15 9a4 4 0 11-5 5c3 1 5-1 5-5z" fill="#fff"/></svg>
  </div>
</footer>
</body>
</html>
```
FILE: styles.css
```css
* { box-sizing: border-box; }
html, body { margin: 0; height: 100%; overflow: hidden; }
body { width: 1920px; height: 1080px; font: 12px "Open Sans", "Noto Sans", sans-serif; color: #111; background: #101010; }
p { margin: 0; }
.defs { position: absolute; width: 0; height: 0; }
.i { width: 28px; height: 28px; display: block; flex: none; overflow: visible; }

.desktop { display: flex; height: 1040px; }
.rhino { width: 884px; height: 1040px; background: #e0e3eb; position: relative; overflow: hidden; display: flex; flex-direction: column; }
/* drop shadow cast by the window on the right */
.rhino::after { content: ""; position: absolute; top: 0; right: 0; bottom: 0; width: 30px; background: linear-gradient(90deg, rgba(0,0,0,0), rgba(0,0,0,.08) 50%, rgba(0,0,0,.34)); }
.gh { width: 1036px; height: 1040px; background: #f0f0f0; display: flex; flex-direction: column; }

.title { height: 31px; flex: none; background: #282828; display: flex; align-items: center; letter-spacing: -.15px; }
.rhino .title { padding-left: 8px; gap: 5px; color: #858585; letter-spacing: -.18px; }
.gh .title { padding-left: 8px; color: #fff; justify-content: space-between; letter-spacing: -.2px; }
.dots { display: flex; gap: 33.500px; padding-right: 17px; }
.dots i { width: 12px; height: 12px; border-radius: 50%; }
.g { background: #55c22d; }
.y { background: #e3bf2c; }
.r { background: #ff5f57; }

.rmenu { height: 20px; flex: none; background: #fff; color: #666; display: grid; grid-template-columns: 55px 53px 39px 45px 66px 47px 43px 68px 77px 85px 54px 79px 54px 60px; padding-left: 7px; line-height: 20px; letter-spacing: -.25px; white-space: nowrap; }
.command { height: 47px; flex: none; margin: 3px 0 0 3px; border-left: 1px solid #b3b8c4; padding-left: 3px; font-family: "Liberation Sans", sans-serif; box-shadow: inset 2px 0 #e0e3eb, inset 3px 0 #b3b8c4; background: linear-gradient(#fff, #fff) 3px 0 no-repeat; }
.command p { height: 28px; line-height: 16px; padding-left: 1px; letter-spacing: .2px; border-bottom: 1px solid #9aa1b3; }
.command .prompt { height: 19px; line-height: 18px; font-weight: bold; font-size: 11.500px; letter-spacing: 0; border: 0; }

.toolarea { height: 58px; flex: none; border-top: 1px solid #b9bdc8; margin-top: 3px; padding-top: 4px; background: linear-gradient(#e0e3eb, #e0e3eb 19px, #f7f8fa 20px, #e3e6ed); }
.tabs { display: grid; grid-template-columns: 61px 59px 73px 80px 75px 135px 65px 75px 52px 70px 53px 49px 60px; padding-left: 7px; height: 15px; font: 11.400px/14px "Liberation Sans", sans-serif; letter-spacing: -.05px; }
.tabs span { position: relative; padding-left: 7px; white-space: nowrap; border-top: 1px solid #8f95a6; border-right: 1px solid #8f95a6; border-bottom: 1px solid #a9afc0; border-radius: 0 4px 0 0; background: linear-gradient(115deg, #e0e3eb 6px, #8f95a6 6px, #8f95a6 7px, #cfd5e8 7px); }
.tabs .on { padding-left: 8px; background: linear-gradient(115deg, #e0e3eb 6px, #8f95a6 6px, #8f95a6 7px, #fff 7px); border-bottom: 0; }
.tools { display: flex; padding-left: 6px; margin-top: 1px; }

.work { display: flex; height: 796px; flex: none; }
.side { width: 64px; flex: none; border-right: 1px solid #d0d3dc; padding: 2px 3px 0 1px; }
.palette { display: grid; grid-template-columns: 28px 28px; border-top: 1px solid #b3b8c4; position: relative; padding-top: 5px; }
.palette .i { margin-left: -1px; }
.palette::before { content: ""; position: absolute; top: 1px; left: 0; right: 0; border-top: 1px solid #b3b8c4; }
.second { margin-top: 98px; padding-top: 4px; }
.viewport { position: relative; flex: 1; background: #9da3ab; overflow: hidden; }
.scene { display: block; }
.axis { font: 14px "Liberation Sans", sans-serif; fill: #4f5358; }
.vplabel { position: absolute; left: 0; top: 0; height: 19px; width: 88px; background: #8ba5c6; padding: 0 2px 0 9px; line-height: 19px; display: flex; justify-content: space-between; align-items: center; letter-spacing: -.4px; color: #222; }
.vplabel i { border: 4px solid transparent; border-top: 5px solid #000; border-bottom: 0; position: relative; }
.vplabel i::before { content: ""; position: absolute; left: -6px; top: -10px; height: 16px; border-left: 1px solid #000; }

.vptabs { display: grid; grid-template-columns: 78px 62px 55px 61px 31px; margin-left: 64px; height: 21px; line-height: 20px; text-align: center; padding-top: 1px; flex: none; letter-spacing: -.35px; }
.vptabs span { height: 20px; border-bottom: 1px solid #9ea4b2; border-right: 1px solid #9ea4b2; border-radius: 0 0 5px 0; padding-left: 4px; background: linear-gradient(53deg, #e0e3eb 8px, #9ea4b2 8px, #9ea4b2 9px, #cfd5e8 9px); }
.vptabs .on { background: linear-gradient(53deg, #e0e3eb 8px, #9ea4b2 8px, #9ea4b2 9px, #fff 9px); }
.vptabs .add { background: linear-gradient(53deg, #e0e3eb 8px, #9ea4b2 8px, #9ea4b2 9px, #e0e3eb 9px); }
.add svg { display: block; margin: 5px auto; }

.osnap { height: 41px; flex: none; display: grid; grid-template-columns: 39px 53px 53px 46px 44px 37px 47px 44px 50px 51px 57px 70px 80px; margin-left: 3px; border-left: 1px solid #b3b8c4; box-shadow: inset 2px 0 #e0e3eb, inset 3px 0 #b3b8c4; padding: 9px 0 0 7px; font-size: 11.500px; letter-spacing: -.5px; }
.osnap label { display: flex; gap: 4px; line-height: 13px; height: 13px; white-space: nowrap; }
.osnap label::before { content: ""; width: 13px; height: 13px; border: 1px solid #222; background: #fff; font: 11px/11px "DejaVu Sans", sans-serif; letter-spacing: 0; text-align: center; flex: none; }
.osnap .ck::before { content: "✓"; }
.osnap .off::before { border-color: #aaa; background: #dcdcdc; width: 14px; height: 14px; }

.rstatus { height: 20px; flex: none; border-top: 1px solid #9ea4b2; display: grid; grid-template-columns: 57px 88px 88px 88px 88px 173px 134px 39px 54px 56px 19px; font: 12px/20px "Liberation Sans", sans-serif; text-align: center; letter-spacing: .15px; white-space: nowrap; }
.rstatus span { border-right: 1px solid #9ea4b2; }
.rstatus .layer { display: flex; align-items: center; gap: 2px; padding-left: 3px; }
.layer i { width: 14px; height: 14px; background: #000; }
.rstatus .act { background: #e1f1fc; font-weight: bold; letter-spacing: -.3px; }
.rstatus .cut { text-align: left; padding-left: 11px; border-right: 0; }

.gmenu { height: 24px; flex: none; display: grid; grid-template-columns: 35px 37px 42px 53px 57px 680px auto; padding-left: 15px; font-size: 11.500px; line-height: 24px; letter-spacing: -.5px; background: linear-gradient(90deg, #f0f0f0, #fcfcfc); white-space: nowrap; }
.gtabs { height: 23px; flex: none; display: flex; border-bottom: 1px solid #999; }
.gtabs > * { width: 28px; height: 23px; text-align: center; }
.gtabs b { font: 900 16px/24px Inter, "Open Sans", sans-serif; color: #3a3a3a; }
.gtabs .sigma { font: bold 17px/23px "Liberation Serif", serif; }
.gtabs .first { background: linear-gradient(#fff, #eee); border: 1px solid #999; border-bottom: 0; border-radius: 6px 6px 0 0; height: 24px; }
.ribbon { height: 86px; flex: none; display: flex; gap: 3px; padding: 2px 0 0 3px; }
.panel { height: 73px; border: 1px solid #777; border-radius: 4px; background: linear-gradient(#dedede, #d2d2d2 40%, #f2f2f2 95%); overflow: hidden; }
.groups { display: flex; height: 58px; padding: 0 2px 0 1px; }
.grp { display: grid; grid-template-rows: 28px 28px; margin-right: 10px; position: relative; }
.grp:last-child { margin-right: 0; }
.grp + .grp::before { content: ""; position: absolute; left: -6px; top: 3px; height: 52px; border-left: 1px solid #b0b0b0; border-right: 1px solid #f2f2f2; }
.c1 { grid-template-columns: 28px; }
.c2 { grid-template-columns: 28px 28px; }
.c3 { grid-template-columns: 28px 28px 28px; }
.c4 { grid-template-columns: 28px 28px 28px 28px; }
.bar { height: 14px; background: linear-gradient(#333, #161616); color: #fff; font: 10.500px/12px "Liberation Sans", sans-serif; text-align: center; position: relative; padding-right: 10px; }
.bar i { position: absolute; right: 2px; top: 0; font: 9px/13px "DejaVu Sans", sans-serif; color: #aaa; }

text { text-anchor: middle; }
.mini { font: bold 7px "Liberation Sans", sans-serif; fill: #eee; }
.mini text, .axis text, .lbl text { text-anchor: start; }
.glyph { font: bold 14px "Liberation Serif", serif; fill: #fff; }
.big { font-size: 18px; }
.uc { font: bold 9px "Liberation Sans", sans-serif; fill: #111; }
.aug { font: 8px "Liberation Sans", sans-serif; fill: #eee; }
.day { font: bold 15px Roboto, sans-serif; fill: #fff; }
.chipt { font: bold 9px "Liberation Mono", monospace; fill: #111; }
.abc { font: bold 10px "Liberation Sans", sans-serif; fill: #111; }
.rec { font: 8.500px "Liberation Sans", sans-serif; fill: #888; }

.ctools { height: 33px; flex: none; border-top: 2px solid #222; border-left: 1px solid #333; margin-left: 1px; background: linear-gradient(#fff, #fbfbfb 40%, #efefef); display: flex; align-items: center; padding-left: 2px; }
.ctools u { width: 1px; height: 21px; background: #777; margin: 0 3px 0 5px; }
.ctools > .i + .i { margin-left: 2px; }
.combo { width: 70px; height: 25px; border: 1px solid #777; background: #fff; display: flex; justify-content: space-between; align-items: center; padding: 0 4px 0 3px; }
.combo + .i { margin-left: 1px; }
.ctools em { border: 3px solid transparent; border-top: 3px solid #000; border-bottom: 0; margin: 0 5px 0 2px; }
.right { margin-left: auto; display: flex; align-items: center; padding-right: 2px; }
.right .i { margin-right: 1px; }
.right u { margin: 0 7px; }
.right u ~ u { margin: 0 2px; }
.ctools .right em { margin: 0 4px 0 -1px; }
.sel { outline: 1px solid #1f7ac0; outline-offset: -1px; background: #eef6fc; }
.canvas { display: block; flex: none; margin-left: 1px; }
.lbl { font: 400 20px "Open Sans", "Noto Sans", sans-serif; fill: #1a1a1a; }
.gstatus { height: 24px; flex: none; background: linear-gradient(90deg, #f0f0f0, #fcfcfc 60%); display: flex; align-items: center; padding: 3px 2px 0 2px; gap: 2px; font-size: 11.500px; letter-spacing: -.52px; border-top: 2px solid #fff; }
.gstatus .ver { margin-left: auto; color: #777; letter-spacing: -.2px; margin-right: 3px; }
.gripper { margin-top: 6px; }

.taskbar { height: 40px; background: #101010; display: flex; }
.t { width: 49px; height: 40px; display: flex; justify-content: center; align-items: center; position: relative; }
.t:first-child { margin-left: -1px; }
.t:nth-child(2) { margin-left: -1px; }
.run::after { content: ""; position: absolute; bottom: 0; left: 5px; right: 4px; height: 2px; background: #aaa; }
.active { background: #333; width: 48px; margin-left: 1px; }
.active::after { left: 0; right: 0; }
.tray { margin-left: auto; display: flex; align-items: center; gap: 8px; padding-right: 3px; color: #fff; border-right: 1px solid #666; margin-right: 4px; }
.tray > svg:nth-child(1) { margin-right: 3px; }
.clock { display: flex; flex-direction: column; align-items: center; line-height: 18px; width: 58px; font-size: 11.500px; letter-spacing: -.35px; white-space: nowrap; }
.note { margin: 0 16px 0 9px; }
```
